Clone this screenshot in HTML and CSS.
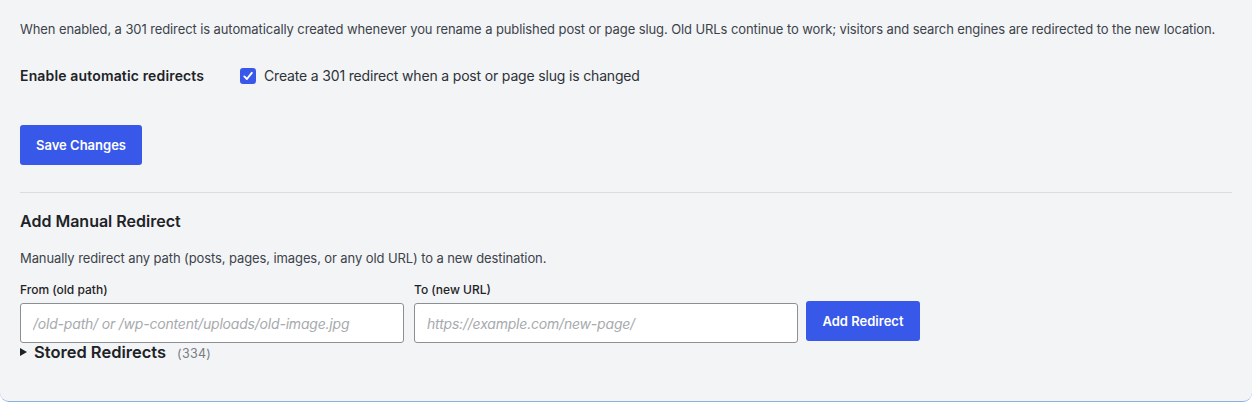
FILE: index.html
```html
<!DOCTYPE html>
<html lang="en">
<head>
<meta charset="utf-8">
<title>Redirects</title>
<link rel="stylesheet" href="styles.css">
</head>
<body>
<div class="card">
  <p class="desc">When enabled, a 301 redirect is automatically created whenever you rename a published post or page slug. Old URLs continue to work; visitors and search engines are redirected to the new location.</p>
  <div class="row">
    <div class="row-label">Enable automatic redirects</div>
    <label class="check">
      <span class="box"><svg width="12" height="12" viewBox="0 0 12 12"><path d="M2.3 6.4 L4.9 9 L9.8 2.8" fill="none" stroke="#fff" stroke-width="1.9" stroke-linecap="round" stroke-linejoin="round"/></svg></span>
      <span>Create a 301 redirect when a post or page slug is changed</span>
    </label>
  </div>
  <button class="btn save">Save Changes</button>
  <hr class="sep">
  <h2 class="title">Add Manual Redirect</h2>
  <p class="desc2">Manually redirect any path (posts, pages, images, or any old URL) to a new destination.</p>
  <div class="form">
    <div class="field">
      <label class="flabel">From (old path)</label>
      <input class="input" type="text" placeholder="/old-path/ or /wp-content/uploads/old-image.jpg">
    </div>
    <div class="field">
      <label class="flabel">To (new URL)</label>
      <input class="input" type="text" placeholder="https://example.com/new-page/">
    </div>
    <button class="btn add">Add Redirect</button>
  </div>
  <div class="stored">
    <span class="tri"></span>
    <span class="stored-title">Stored Redirects</span>
    <span class="count">(334)</span>
  </div>
</div>
</body>
</html>
```
FILE: styles.css
```css
html, body {
  margin: 0;
  padding: 0;
  background: #ffffff;
}
body {
  font-family: Inter, "Noto Sans", sans-serif;
  color: #1d2327;
  width: 1252px;
  height: 403px;
  overflow: hidden;
}
.card {
  box-sizing: border-box;
  width: 1252px;
  height: 402px;
  background: #f3f4f6;
  border-radius: 0 0 9px 9px;
  border-bottom: 1px solid #8cb0e0;
  padding: 20px 20px 0 20px;
}
.desc {
  margin: 0;
  font-size: 13px;
  line-height: 18px;
  color: #3c434a;
  letter-spacing: -0.1px;
}
.row {
  display: flex;
  align-items: center;
  margin-top: 29px;
}
.row-label {
  width: 220px;
  font-size: 14px;
  font-weight: 600;
  color: #1d2327;
  letter-spacing: 0.15px;
}
.check {
  display: flex;
  align-items: center;
  gap: 8px;
  font-size: 14px;
  color: #2c3338;
  letter-spacing: -0.17px;
}
.box {
  width: 16px;
  height: 16px;
  border-radius: 3px;
  background: #3858e9;
  display: flex;
  align-items: center;
  justify-content: center;
}
.btn {
  background: #3858e9;
  color: #fff;
  border: none;
  border-radius: 3px;
  font-family: inherit;
  font-weight: 600;
  font-size: 13px;
  padding: 0;
  cursor: pointer;
}
.save {
  display: block;
  margin-top: 41px;
  width: 122px;
  height: 40px;
}
.sep {
  border: none;
  border-top: 1px solid #dcdcde;
  margin: 27px 0 0 0;
  height: 0;
}
.title {
  margin: 18px 0 0 0;
  font-size: 16px;
  font-weight: 600;
  line-height: 20px;
  color: #1d2327;
}
.desc2 {
  margin: 18px 0 0 0;
  font-size: 13px;
  line-height: 18px;
  color: #3c434a;
  letter-spacing: -0.1px;
}
.form {
  display: flex;
  align-items: flex-end;
  gap: 10px;
  margin-top: 15px;
}
.field {
  display: flex;
  flex-direction: column;
  gap: 6px;
}
.flabel {
  font-size: 12px;
  font-weight: 500;
  color: #1d2327;
  line-height: 15px;
}
.input {
  box-sizing: border-box;
  width: 384px;
  height: 40px;
  border: 1px solid #8c8f94;
  border-radius: 3px;
  background: #fff;
  padding: 0 12px;
  font-family: inherit;
  font-size: 14px;
  letter-spacing: -0.2px;
  margin: 0;
}
.input::placeholder {
  color: #a7aaad;
  font-style: italic;
}
.add {
  width: 114px;
  height: 40px;
  margin-bottom: 2px;
  margin-left: -2px;
}
.stored {
  display: flex;
  align-items: baseline;
  margin-top: -1px;
}
.tri {
  display: inline-block;
  width: 0;
  height: 0;
  border-left: 7px solid #1d2327;
  border-top: 4px solid transparent;
  border-bottom: 4px solid transparent;
  margin-right: 7px;
  position: relative;
  top: -2px;
}
.stored-title {
  font-size: 16.5px;
  font-weight: 600;
  color: #1d2327;
}
.count {
  font-size: 12.5px;
  color: #787c82;
  margin-left: 11px;
  letter-spacing: 0.3px;
}
```
